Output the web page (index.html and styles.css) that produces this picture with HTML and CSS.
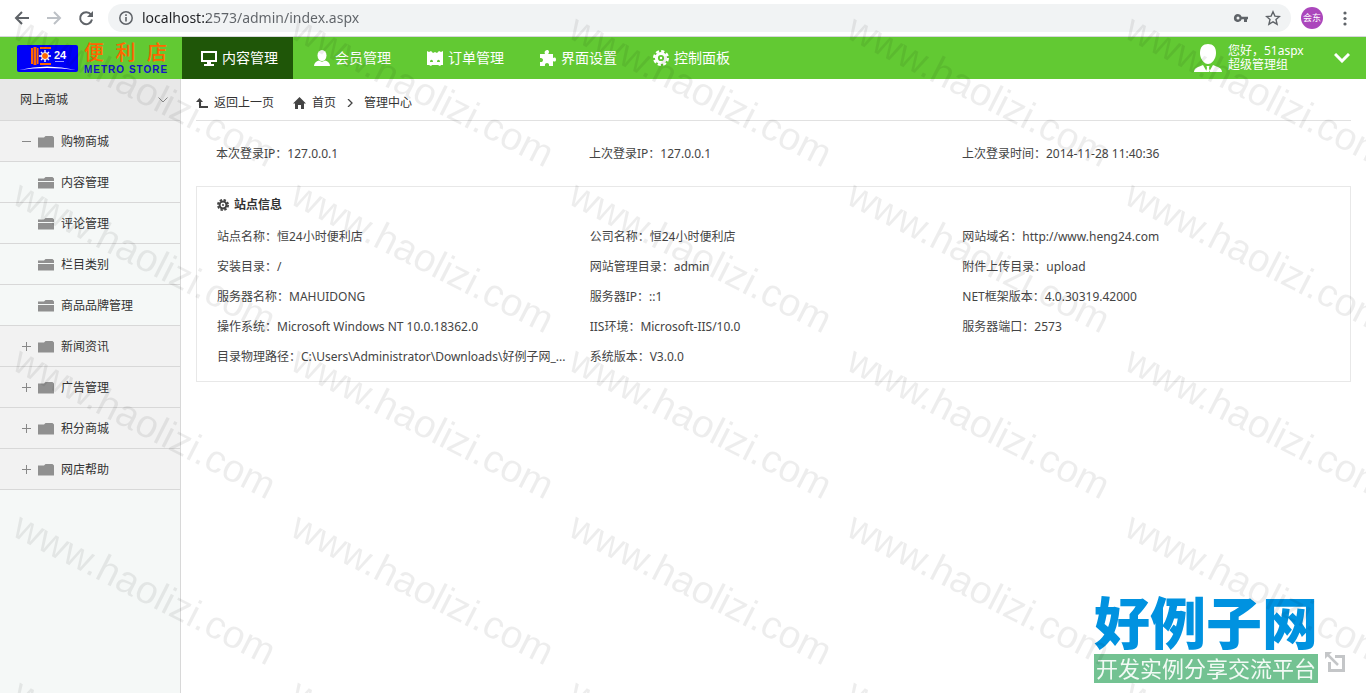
FILE: index.html
```
<!DOCTYPE html>
<html lang="zh-CN">
<head>
    <meta charset="UTF-8">
    <meta name="viewport" content="width=device-width, initial-scale=1.0">
    <title>后台管理中心</title>
    <link rel="stylesheet" href="styles.css">
</head>
<body>
    <!-- Browser toolbar -->
    <div class="browser-bar">
        <button class="bar-btn" aria-label="后退">
            <svg width="16" height="16" viewBox="0 0 16 16" fill="none" stroke="#5f6368" stroke-width="2"><path d="M15 8H2M8 2L2 8l6 6"/></svg>
        </button>
        <button class="bar-btn" aria-label="前进">
            <svg width="16" height="16" viewBox="0 0 16 16" fill="none" stroke="#bdc1c6" stroke-width="2"><path d="M1 8h13M8 2l6 6-6 6"/></svg>
        </button>
        <button class="bar-btn" aria-label="刷新">
            <svg width="16" height="16" viewBox="0 0 16 16"><path d="M13 4.6A6 6 0 1 0 14 9.5" fill="none" stroke="#5f6368" stroke-width="2"/><path d="M15 1v6H9z" fill="#5f6368"/></svg>
        </button>
        <div class="address">
            <svg width="16" height="16" viewBox="0 0 16 16"><circle cx="8" cy="8" r="6.2" fill="none" stroke="#5f6368" stroke-width="1.5"/><path d="M7.2 7h1.6v4.5H7.2zM7.2 4.3h1.6v1.6H7.2z" fill="#5f6368"/></svg>
            <input type="text" class="address-input" aria-label="地址" value="localhost:2573/admin/index.aspx">
            <button class="bar-btn" aria-label="密码">
                <svg width="16" height="16" viewBox="0 0 16 16"><path fill="#5f6368" fill-rule="evenodd" d="M5 4a4 4 0 1 0 3.7 5.3H11V12h3V9.300H15V6.700H8.700A4 4 0 0 0 5 4zm0 2.500a1.500 1.500 0 1 1 0 3 1.500 1.500 0 0 1 0-3z"/></svg>
            </button>
            <button class="bar-btn" aria-label="收藏">
                <svg width="16" height="16" viewBox="0 0 16 16" fill="none" stroke="#5f6368" stroke-width="1.4"><path d="M8 1.800l1.900 4.300 4.600.4-3.500 3.100 1.100 4.600L8 11.800l-4.100 2.400L5 9.600 1.500 6.500l4.600-.4z"/></svg>
            </button>
        </div>
        <button class="profile">会东</button>
        <button class="bar-btn" aria-label="菜单">
            <svg width="16" height="16" viewBox="0 0 16 16" fill="#5f6368"><circle cx="8" cy="3" r="1.600"/><circle cx="8" cy="8.500" r="1.600"/><circle cx="8" cy="14" r="1.600"/></svg>
        </button>
    </div>

    <!-- Header -->
    <header class="header">
        <a href="#" class="logo">
            <svg width="61" height="27" viewBox="0 0 61 27">
                <rect width="61" height="27" rx="2" fill="#0000f8"/>
                <path d="M2 25Q30 18 59 25Q30 21 2 25z" fill="#fff"/>
                <g fill="#f60"><path d="M14 3h2v16h-2zM16.500 2h3v18h-3zM20 3h1.500v16H20z"/><path d="M23 2h11v2H23zM23 18h11v2H23z"/></g>
                <g stroke="#fff" stroke-width="1.400"><path d="M28 5v12M22 11h12M24 7l8 8M32 7l-8 8"/></g>
                <circle cx="28" cy="11" r="3.500" fill="#f60" stroke="#fff"/>
                <text x="37" y="14" class="logo-num">24</text>
                <path d="M38 16.500h9" stroke="#99f" stroke-width="1"/>
            </svg>
            <span class="logo-text">
                <span class="logo-cn"><span>便</span><span>利</span><span>店</span></span>
                <span class="logo-en">METRO STORE</span>
            </span>
        </a>
        <nav class="nav">
            <a href="#" class="selected">
                <svg width="16" height="16" viewBox="0 0 16 16" fill="#fff"><path fill-rule="evenodd" d="M0 1h16v11H0zM2 3v7h12V3z"/><path d="M6 12h4v2h3v2H3v-2h3z"/></svg>
                内容管理
            </a>
            <a href="#">
                <svg width="16" height="16" viewBox="0 0 16 16" fill="#fff"><ellipse cx="8" cy="5.500" rx="4.500" ry="5.500"/><path d="M0 16c0-3 2-4.500 5-5.500 2 1.500 4 1.500 6 0 3 1 5 2.500 5 5.500z"/></svg>
                会员管理
            </a>
            <a href="#">
                <svg width="16" height="16" viewBox="0 0 16 16" fill="#fff"><path fill-rule="evenodd" d="M0 1l2 1 2-1 2 2 2-1 2 1 2-2 2 1 2-1v14h-2l-1 1-2-1H5l-1 1-2-1H0zM3 12h3c0-3-3-3-3 0zm7 0h3c0-3-3-3-3 0z"/></svg>
                订单管理
            </a>
            <a href="#">
                <svg width="16" height="16" viewBox="0 0 16 16" fill="#fff"><path d="M0 4h5C3 0 9-1.500 9 2c0 1-1 1.500-.5 2H13v4c1-.5 3-1 3 1.500S14 12 13 11v5H9c1-4-5-4-4 0H0v-4c4 1 4-5 0-4z"/></svg>
                界面设置
            </a>
            <a href="#">
                <svg width="16" height="16" viewBox="0 0 16 16"><circle cx="8" cy="8" r="4.600" fill="none" stroke="#fff" stroke-width="3"/><circle cx="8" cy="8" r="6.800" fill="none" stroke="#fff" stroke-width="2.400" stroke-dasharray="3.200 2.140"/><circle cx="8" cy="8" r="1.200" fill="#fff"/></svg>
                控制面板
            </a>
        </nav>
        <div class="user">
            <svg width="28" height="28" viewBox="0 0 28 28" fill="#fff"><path d="M14 0c5 0 8 3 8 9s-4 11-8 11S6 15 6 9s3-9 8-9z"/><path d="M0 28c0-4 4-5 9-7l4 7zM28 28c0-4-4-5-9-7l-4 7zM12.500 22h3l-.5 2 1 4h-4l1-4z"/></svg>
            <span class="user-text">您好，51aspx<br>超级管理组</span>
            <button class="user-more" aria-label="更多">
                <svg width="16" height="10" viewBox="0 0 16 10" fill="none" stroke="#fff" stroke-width="3"><path d="M1 1l7 7 7-7"/></svg>
            </button>
        </div>
    </header>

    <div class="wrap">
        <!-- Sidebar -->
        <aside class="sidebar">
            <h2 class="side-title">网上商城
                <svg width="10" height="6" viewBox="0 0 10 6" fill="none" stroke="#888"><path d="M.5.5L5 5 9.500.5"/></svg>
            </h2>
            <ul class="tree">
                <li>
                    <a href="#"><i class="toggle minus"></i><i class="folder"></i>购物商城</a>
                    <ul class="sub">
                        <li><a href="#"><i class="toggle none"></i><i class="folder open"></i>内容管理</a></li>
                        <li><a href="#"><i class="toggle none"></i><i class="folder open"></i>评论管理</a></li>
                        <li><a href="#"><i class="toggle none"></i><i class="folder open"></i>栏目类别</a></li>
                        <li><a href="#"><i class="toggle none"></i><i class="folder open"></i>商品品牌管理</a></li>
                    </ul>
                </li>
                <li><a href="#"><i class="toggle"></i><i class="folder"></i>新闻资讯</a></li>
                <li><a href="#"><i class="toggle"></i><i class="folder"></i>广告管理</a></li>
                <li><a href="#"><i class="toggle"></i><i class="folder"></i>积分商城</a></li>
                <li><a href="#"><i class="toggle"></i><i class="folder"></i>网店帮助</a></li>
            </ul>
        </aside>

        <!-- Content -->
        <main class="content">
            <div class="location">
                <a href="#" class="back">
                    <svg width="12" height="10" viewBox="0 0 12 10" fill="#444"><path d="M3.500 0L7 4H5v4h7v2H3V4H0z"/></svg>
                    返回上一页
                </a>
                <a href="#" class="home">
                    <svg width="13" height="12" viewBox="0 0 13 12" fill="#444"><path d="M6.500 0L13 6.500h-2V12H8V8H5v4H2V6.500H0z"/></svg>
                    首页
                </a>
                <svg width="6" height="8" viewBox="0 0 6 8" fill="none" stroke="#444" stroke-width="1.300"><path d="M1 0l4 4-4 4"/></svg>
                <span>管理中心</span>
            </div>

            <ul class="info login-info">
                <li>本次登录IP：127.0.0.1</li>
                <li>上次登录IP：127.0.0.1</li>
                <li>上次登录时间：2014-11-28 11:40:36</li>
            </ul>

            <section class="box">
                <h3>
                    <svg width="12" height="12" viewBox="0 0 16 16"><circle cx="8" cy="8" r="4.600" fill="none" stroke="#444" stroke-width="2.600"/><circle cx="8" cy="8" r="6.800" fill="none" stroke="#444" stroke-width="2.400" stroke-dasharray="3.200 2.140"/><circle cx="8" cy="8" r="1.300" fill="#444"/></svg>
                    站点信息
                </h3>
                <ul class="info">
                    <li>站点名称：恒24小时便利店</li>
                    <li>公司名称：恒24小时便利店</li>
                    <li>网站域名：http://www.heng24.com</li>
                    <li>安装目录：/</li>
                    <li>网站管理目录：admin</li>
                    <li>附件上传目录：upload</li>
                    <li>服务器名称：MAHUIDONG</li>
                    <li>服务器IP：::1</li>
                    <li>NET框架版本：4.0.30319.42000</li>
                    <li>操作系统：Microsoft Windows NT 10.0.18362.0</li>
                    <li>IIS环境：Microsoft-IIS/10.0</li>
                    <li>服务器端口：2573</li>
                    <li>目录物理路径：C:\Users\Administrator\Downloads\好例子网_...</li>
                    <li>系统版本：V3.0.0</li>
                </ul>
            </section>
        </main>
    </div>

    <div class="site-mark">
        <div>
            <div class="mark-name">好例子网</div>
            <div class="mark-slogan">开发实例分享交流平台</div>
        </div>
        <svg width="20" height="20" viewBox="0 0 20 20" fill="none" stroke="#c4c6c8" stroke-width="3"><path d="M10 4.500h8.500v14h-14V10"/><path d="M2 2l11 11" stroke-width="2.500"/><path d="M0 0h7L0 7z" fill="#c4c6c8" stroke="none"/></svg>
    </div>

    <div class="watermark" id="watermark" aria-hidden="true"></div>

    <script>
        // Fill the window with watermark cells
        const watermark = document.getElementById('watermark');
        const cols = Math.ceil(window.innerWidth / 278);
        const rows = Math.ceil(window.innerHeight / 166);

        watermark.style.gridTemplateColumns = `repeat(${cols}, 278px)`;
        for (let i = 0; i < cols * rows; i++) {
            const cell = document.createElement('span');
            cell.textContent = 'www.haolizi.com';
            watermark.appendChild(cell);
        }
    </script>
</body>
</html>
```
FILE: styles.css
```
* {
    box-sizing: border-box;
}
body {
    margin: 0;
    min-height: 100vh;
    display: flex;
    flex-direction: column;
    font: 12px/20px "Noto Sans", "Noto Sans CJK SC", sans-serif;
    color: #333;
    background: #fff;
}
ul, h2, h3 {
    margin: 0;
    padding: 0;
    list-style: none;
    font-size: 12px;
}
a {
    color: inherit;
    text-decoration: none;
}
button {
    padding: 0;
    border: none;
    background: none;
    font-family: inherit;
    cursor: pointer;
}
svg {
    display: block;
    flex: none;
}

/* Browser toolbar */
.browser-bar {
    display: flex;
    align-items: center;
    gap: 16px;
    height: 37px;
    padding: 0 14px;
    border-bottom: 1px solid #d5d7d9;
}
.address {
    flex: 1;
    display: flex;
    align-items: center;
    gap: 16px;
    height: 28px;
    margin-right: -6px;
    margin-left: -2px;
    padding: 0 10px;
    border-radius: 14px;
    background: #f1f3f4;
}
.address-input {
    flex: 1;
    margin-left: -8px;
    padding: 0;
    border: none;
    outline: none;
    font: 14px/20px "Noto Sans", sans-serif;
    color: transparent;
    background: linear-gradient(to right, #202124 65px, #5f6368 65px);
    -webkit-background-clip: text;
    background-clip: text;
}
.profile {
    width: 22px;
    height: 22px;
    border-radius: 50%;
    background: #ab47bc;
    color: #fff;
    font-size: 9px;
    line-height: 22px;
}
.browser-bar {
    padding-right: 13px;
}
.profile + .bar-btn {
    margin-left: -2px;
}

/* Header */
.header {
    display: flex;
    height: 42px;
    background: #62c933;
    color: #fff;
}
.logo {
    display: flex;
    align-items: center;
    gap: 6px;
    width: 182px;
    padding-left: 17px;
}
.logo-num {
    font: bold 11px "Liberation Sans", sans-serif;
    fill: #fff;
}
.logo-text {
    width: 83px;
}
.logo-cn {
    display: flex;
    justify-content: space-between;
    font-size: 20px;
    font-weight: 500;
    line-height: 24px;
    color: #f60;
}
.logo-en {
    display: block;
    font: bold 10px/10px "Liberation Sans", sans-serif;
    letter-spacing: 1px;
    white-space: nowrap;
    color: #1414c8;
}
.nav {
    display: flex;
    gap: 2px;
    font-size: 14px;
}
.nav a {
    display: flex;
    align-items: center;
    gap: 5px;
    padding: 0 15px 1px 19px;
}
.nav .selected {
    background: #1f5608;
}
.user {
    display: flex;
    align-items: center;
    gap: 6px;
    margin-left: auto;
    padding-right: 16px;
}
.user-text {
    width: 100px;
    line-height: 14px;
}

/* Sidebar */
.wrap {
    flex: 1;
    display: flex;
}
.sidebar {
    width: 181px;
    border-right: 1px solid #d8d8d8;
    background: #f5f8f7;
}
.side-title {
    display: flex;
    align-items: center;
    justify-content: space-between;
    height: 42px;
    padding: 1px 12px 0 20px;
    border-bottom: 1px solid #d8d8d8;
    background: #e8e8e8;
    font-weight: normal;
}
.tree a {
    display: flex;
    align-items: center;
    height: 41px;
    padding: 1px 0 0 22px;
    border-bottom: 1px solid #d8d8d8;
    background: #f2f2f2;
}
.tree .sub a {
    background: #f5f8f7;
}
.toggle {
    width: 9px;
    height: 9px;
    margin-right: 7px;
    background: linear-gradient(#888, #888) center / 9px 1px no-repeat, linear-gradient(#888, #888) center / 1px 9px no-repeat;
}
.toggle.minus {
    background: linear-gradient(#888, #888) center / 9px 1px no-repeat;
}
.toggle.none {
    background: none;
}
.folder {
    width: 16px;
    height: 12px;
    margin-right: 7px;
    background: #909090;
    clip-path: polygon(0 2px, 6px 2px, 8px 0, 14px 0, 16px 2px, 16px 12px, 0 12px);
}
.folder.open {
    background: linear-gradient(#909090 4px, #f5f8f7 4px, #f5f8f7 5px, #909090 5px);
}

/* Content */
.content {
    flex: 1;
    min-width: 0;
    padding: 0 15px;
}
.location {
    display: flex;
    align-items: center;
    gap: 11px;
    height: 42px;
    padding-top: 6px;
    border-bottom: 1px solid #e1e1e1;
}
.location a {
    display: flex;
    align-items: center;
    gap: 6px;
}
.back {
    margin-right: 8px;
}
.info {
    display: grid;
    grid-template-columns: repeat(3, 1fr);
    line-height: 30px;
    color: #444;
}
.info li {
    min-width: 0;
    overflow: hidden;
    white-space: nowrap;
    text-overflow: ellipsis;
}
.login-info {
    padding: 18px 16px 17px 20px;
}
.box {
    padding: 5px 15px 9px 20px;
    border: 1px solid #e8e8e8;
}
.box h3 {
    display: flex;
    align-items: center;
    gap: 5px;
    height: 30px;
    padding-bottom: 4px;
}

/* Corner mark */
.site-mark {
    position: fixed;
    right: 21px;
    bottom: 10px;
    display: flex;
    align-items: flex-end;
    gap: 7px;
}
.site-mark svg {
    margin-bottom: 11px;
}
.mark-name {
    padding-bottom: 4px;
    font: 900 56px/60px "Noto Sans CJK SC", sans-serif;
    color: #0092e0;
}
.mark-slogan {
    padding: 0 2px;
    background: #73c292;
    color: #f2faf5;
    font-size: 22px;
    line-height: 29px;
}

/* Watermark */
.watermark {
    position: fixed;
    inset: 0;
    display: grid;
    grid-auto-rows: 166px;
    padding: 4px 0 0 10px;
    overflow: hidden;
    pointer-events: none;
    font: 39px/40px "Liberation Sans", sans-serif;
    color: rgba(0, 0, 0, 0.07);
}
.watermark span {
    transform: rotate(27deg);
    transform-origin: 0 34px;
    white-space: nowrap;
}
```
